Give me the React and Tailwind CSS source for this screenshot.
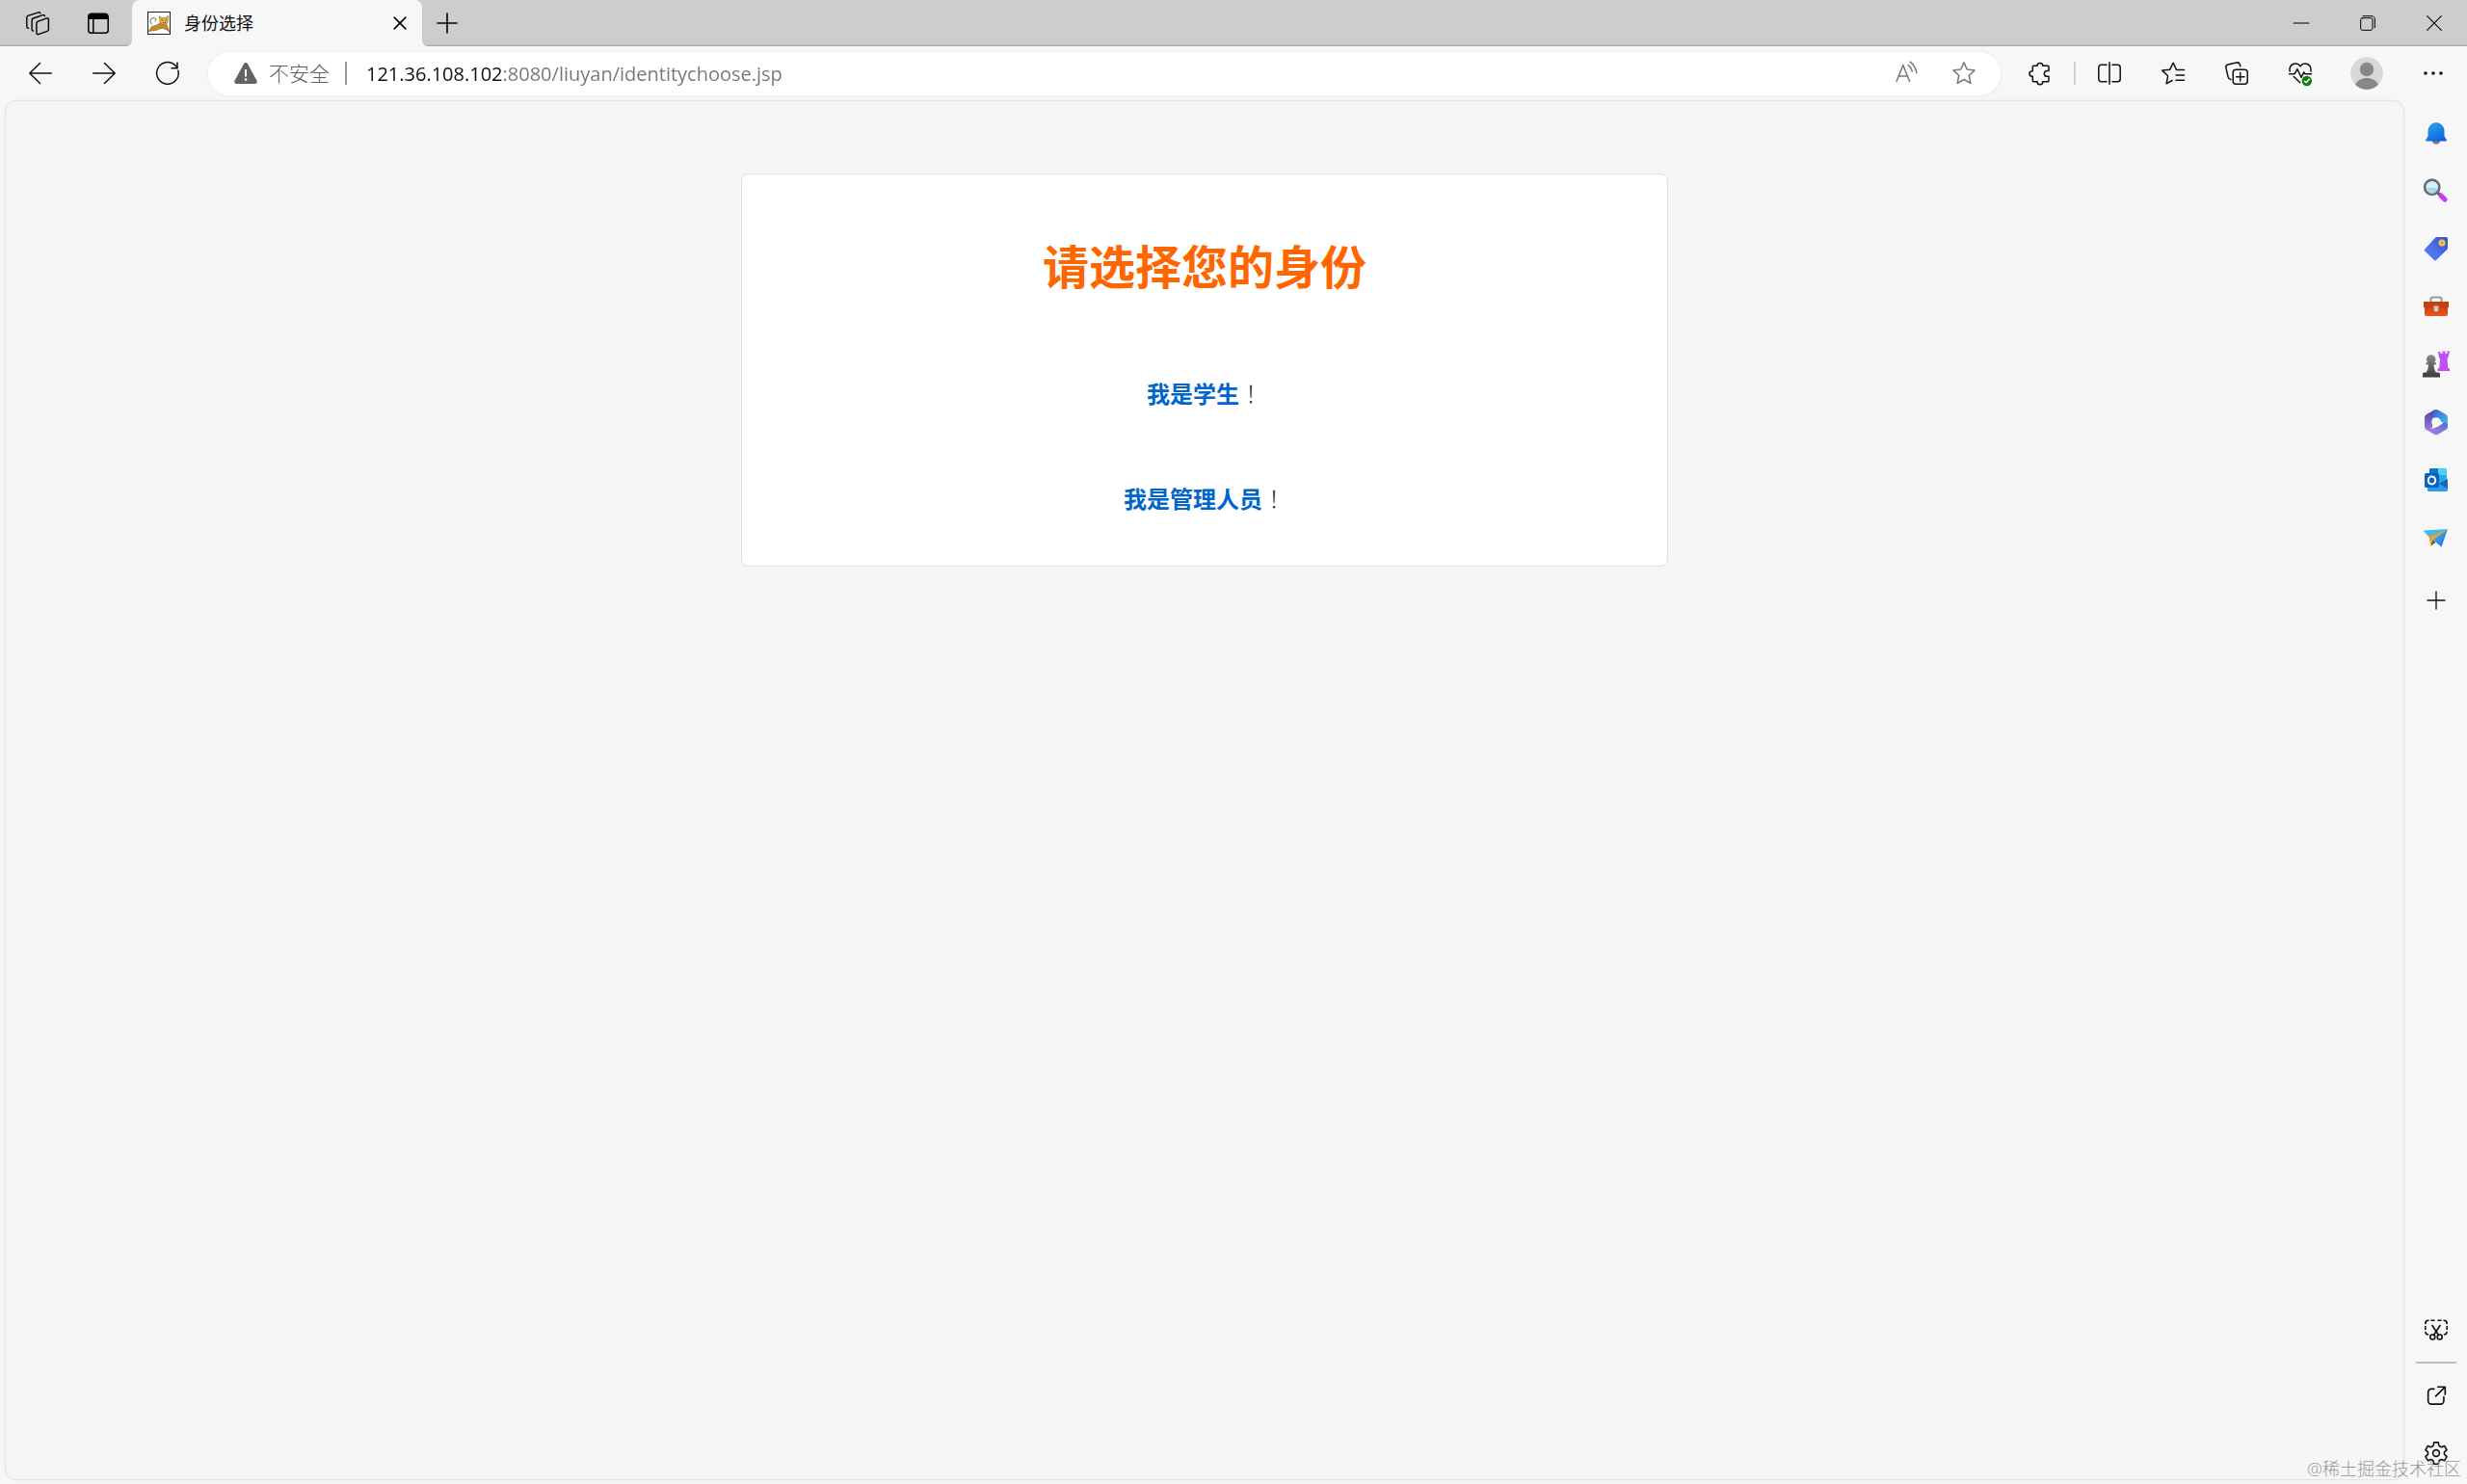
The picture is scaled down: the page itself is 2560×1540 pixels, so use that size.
import { useState } from 'react';

const Icon = ({ children, size = 'size-6', width = 1.5 }) => (
  <svg
    viewBox="0 0 24 24"
    className={`${size} shrink-0 overflow-visible`}
    fill="none"
    stroke="currentColor"
    strokeWidth={width}
    strokeLinecap="round"
    strokeLinejoin="round"
    aria-hidden="true"
  >
    {children}
  </svg>
);

const IconButton = ({ label, className = 'w-[66px]', children }) => (
  <button aria-label={label} className={`${className} flex h-full shrink-0 items-center justify-center`}>
    {children}
  </button>
);

const STAR = 'M12 .9l3.2 7.1 7.9.9-5.8 5.4 1.5 8.1-6.8-3.9-6.8 3.9 1.5-8.1L.9 8.9l7.9-.9z';

const TomcatIcon = () => (
  <svg viewBox="0 0 24 24" className="size-6 shrink-0" aria-hidden="true">
    <rect x=".5" y=".5" width="23" height="23" fill="#fff" stroke="#222" />
    <path d="M1 20.500l3.500-5 5-1.500 4-2.500 6 1.500 2 4 1.500 4.500-3-2.500-4-1.500-4 .5-2.500 1.500-4.500.5z" fill="#c28f2c" stroke="#76561c" strokeWidth=".5" />
    <path d="M12.300 4.500l2.500 1.800h4l2.600-2 .2 5-1.300 3.500-3 1.200-3.300-1.500-1.500-3z" fill="#dcae4c" stroke="#8b6722" strokeWidth=".5" />
    <path d="M14.500 8.500l1.500.6M20 8.500l-1.500.6M16 11.300l1.500.6 1.500-.6" stroke="#4b3a1c" strokeWidth=".7" fill="none" />
    <path d="M4.500 13.500C2.500 11.500 2.600 7.500 5 6.800c2-.4 3.600.3 4.300 1.700M7.500 10l1.800-1.500" stroke="#333" strokeWidth=".8" fill="none" />
  </svg>
);

const TabStrip = () => (
  <header className="flex h-12 items-stretch bg-[#cdcdcd] pl-[7px] shadow-[inset_0_-2px_2px_-1px_rgba(0,0,0,0.22)]">
    <IconButton label="工作区" className="w-[63px]">
      <Icon width={1.4}>
        <path d="M12 10.3l9.6-3.4a1.3 1.3 0 0 1 1.8 1.3v10.2a2 2 0 0 1-1.3 1.9l-9.2 3.3a1.5 1.5 0 0 1-2-1.4V12a2 2 0 0 1 1.1-1.7z" />
        <path d="M19.5 4.6a1.5 1.5 0 0 0-2-1L7.4 7a2 2 0 0 0-1.3 1.900v9.600a1.500 1.500 0 0 0 1.500 1.500" />
        <path d="M14.8 1.8a1.500 1.500 0 0 0-2-1L2 4.400A2 2 0 0 0 .8 6.300v9.400c0 1 .8 1.600 1.800 1.600" />
      </Icon>
    </IconButton>
    <IconButton label="标签操作" className="w-[63px]">
      <Icon>
        <path d="M1.8 7.300V5.500a3.300 3.300 0 0 1 3.300-3.300h13.800a3.300 3.300 0 0 1 3.300 3.300v1.800z" fill="currentColor" />
        <path d="M1.8 7v12.200a3 3 0 0 0 3 3h14.400a3 3 0 0 0 3-3V7M6.800 7v15" />
      </Icon>
    </IconButton>
    <div className="relative ml-1 flex w-[301px] items-center rounded-t-lg bg-[#f7f7f7] pr-4 pl-4">
      <svg viewBox="0 0 6 6" className="absolute bottom-0 -left-1.5 size-1.5" aria-hidden="true">
        <path d="M6 0v6H0a6 6 0 0 0 6-6z" fill="#f7f7f7" />
      </svg>
      <svg viewBox="0 0 6 6" className="absolute -right-1.5 bottom-0 size-1.5" aria-hidden="true">
        <path d="M0 0v6h6a6 6 0 0 1-6-6z" fill="#f7f7f7" />
      </svg>
      <TomcatIcon />
      <span className="ml-3.5 flex-1 text-lg leading-6 text-[#111]">身份选择</span>
      <button aria-label="关闭标签页" className="flex size-3.5">
        <Icon size="size-3.5" width={2.8}>
          <path d="M2 2l20 20M22 2L2 22" />
        </Icon>
      </button>
    </div>
    <IconButton label="新建标签页" className="w-[52px]">
      <Icon size="size-5" width={1.9}>
        <path d="M12 0v24M0 12h24" />
      </Icon>
    </IconButton>
    <div className="ml-auto flex">
      <IconButton label="最小化" className="w-[69px]">
        <Icon size="size-4" width={1.8}><path d="M0 12h24" /></Icon>
      </IconButton>
      <IconButton label="还原" className="w-[69px]">
        <Icon size="size-4" width={1.5}>
          <rect x="1" y="4" width="18.5" height="19" rx="3" />
          <path d="M4.5 1H18c3 0 5 2 5 5v13" />
        </Icon>
      </IconButton>
      <IconButton label="关闭" className="w-[69px]">
        <Icon size="size-4" width={1.7}><path d="M1 1l22 22M23 1L1 23" /></Icon>
      </IconButton>
    </div>
  </header>
);

const AddressBar = () => {
  const [url, setUrl] = useState('121.36.108.102:8080/liuyan/identitychoose.jsp');

  return (
    <div className="ml-[9px] flex h-[45px] flex-1 items-center rounded-full bg-white pl-[27px] shadow-[0_0_0_2px_#f2f2f2]">
      <button className="flex items-center text-[21px] leading-8 font-light text-[#5f5f5f]">
        <svg viewBox="0 0 24 24" className="mr-3 size-6" aria-hidden="true">
          <path d="M10 2.2a2.3 2.3 0 0 1 4 0l9.5 17.5a2.2 2.2 0 0 1-2 3.3h-19a2.2 2.2 0 0 1-2-3.3z" fill="#636363" />
          <path d="M12 8v7.5" stroke="#fff" strokeWidth="2" />
          <circle cx="12" cy="18.6" r="1.3" fill="#fff" />
        </svg>
        不安全
      </button>
      <span className="mx-4 h-6 w-0.5 bg-[#999]" />
      <input
        type="text"
        aria-label="地址栏"
        value={url}
        onChange={(e) => setUrl(e.target.value)}
        className="ml-1 h-8 min-w-0 flex-1 bg-[linear-gradient(to_right,#111_142px,#767676_142px)] bg-clip-text text-xl text-transparent caret-black outline-none"
      />
      <div className="flex h-full text-[#777]">
        <IconButton label="大声朗读" className="w-[60px]">
          <Icon>
            <path d="M2 20.5L8.8 3.5l6.8 17M4.300 15h9.200" />
            <path d="M14.300 3.600c1.900 1.600 3.300 3.800 4 6.400M16 .200c3.700 2.600 6 6.600 6.900 11.300" />
          </Icon>
        </IconButton>
        <IconButton label="收藏" className="mr-2 w-[60px]">
          <Icon><path d={STAR} /></Icon>
        </IconButton>
      </div>
    </div>
  );
};

const Toolbar = () => (
  <div className="flex h-14 items-center pr-0.5 pl-[9px] text-[#111]">
    <IconButton label="后退">
      <Icon><path d="M23.3 12H.8M11.5 1.5L.8 12l10.7 10.5" /></Icon>
    </IconButton>
    <IconButton label="前进">
      <Icon><path d="M.7 12h22.5M12.5 1.5L23.2 12 12.5 22.5" /></Icon>
    </IconButton>
    <IconButton label="刷新">
      <Icon>
        <path d="M22.900 9.200A11.300 11.300 0 1 1 20 4l1.900 2.300" />
        <path d="M22 .600v6.200h-6.400" strokeLinecap="butt" />
      </Icon>
    </IconButton>
    <AddressBar />
    <IconButton label="扩展" className="ml-2 w-[66px]">
      <Icon>
        <path d="M9 4.300a2.900 2.900 0 0 1 5.800 0h5a1.200 1.200 0 0 1 1.200 1.200v4h-1.800a2.900 2.900 0 0 0 0 5.800H21v4.200a1.200 1.200 0 0 1-1.200 1.200h-5.100v.3a2.800 2.800 0 0 1-5.600 0v-.3H5.500a1.200 1.200 0 0 1-1.200-1.200v-4.200h-.5a2.800 2.800 0 0 1 0-5.600h.5V5.500a1.200 1.200 0 0 1 1.200-1.200z" />
      </Icon>
    </IconButton>
    <span className="mx-0.5 h-6 w-0.5 bg-[#d0d0d0]" />
    <IconButton label="分屏">
      <Icon>
        <path d="M12 .8v22.400M9 3.300H3.600A2.800 2.800 0 0 0 .8 6.100v11.800a2.800 2.800 0 0 0 2.800 2.800H9M15 3.300h5.400a2.800 2.800 0 0 1 2.800 2.800v11.800a2.800 2.800 0 0 1-2.800 2.800H15" />
      </Icon>
    </IconButton>
    <IconButton label="收藏夹">
      <Icon>
        <path d="M23.500 8.500h-8l-3.300-7.300-3.500 7-7.900.9 5.800 5.700-1.500 8 6-3.300M15 14h8.500M15 19.300h8.500" />
      </Icon>
    </IconButton>
    <IconButton label="集锦">
      <Icon>
        <rect x="8.2" y="8.2" width="15" height="15" rx="3" />
        <path d="M15.700 11.500v8.400M11.500 15.700h8.400M5.800 18.500a3.400 3.400 0 0 1-2.700-2.600L.9 6.300a2.700 2.700 0 0 1 2-3.200l9-2.100a2.900 2.900 0 0 1 3.500 2.100l.4 1.700" />
      </Icon>
    </IconButton>
    <IconButton label="浏览器概要">
      <Icon>
        <path d="M1.200 10A6 6 0 0 1 1 7.700c.4-5.900 7.600-7.700 11-3C15.400 0 22.600 1.800 23 7.700c0 .8 0 1.500-.2 2.300M.5 12.700h5.700l2.800-5 4 8.600 2.700-5.400 1.200 1.800h6.600M5.300 15.500l6.500 6.200" />
        <circle cx="18.8" cy="20" r="5.2" fill="#107c10" stroke="none" />
        <path d="M16.500 20.200l1.600 1.600 3.200-3.500" stroke="#fff" />
      </Icon>
    </IconButton>
    <IconButton label="个人资料" className="w-[72px]">
      <svg viewBox="0 0 34 34" className="size-[34px] rounded-full" aria-hidden="true">
        <circle cx="17" cy="17" r="17" fill="#d8d8d8" />
        <circle cx="17" cy="13" r="7.2" fill="#8a8785" />
        <path d="M5 29c2-4.500 6.800-7 12-7s10 2.500 12 7a17 17 0 0 1-24 0z" fill="#8a8785" />
      </svg>
    </IconButton>
    <IconButton label="设置及其他">
      <svg viewBox="0 0 24 24" className="size-6 overflow-visible" fill="currentColor" aria-hidden="true">
        <circle cx="4" cy="12" r="1.8" />
        <circle cx="12" cy="12" r="1.8" />
        <circle cx="20" cy="12" r="1.8" />
      </svg>
    </IconButton>
  </div>
);

// Shared gradients for the sidebar app icons
const Gradients = () => (
  <svg className="absolute size-0" aria-hidden="true">
    <defs>
      <linearGradient id="bell" x1="0" y1="0" x2=".6" y2="1">
        <stop offset="0" stopColor="#2ab0e6" /><stop offset="1" stopColor="#1461e0" />
      </linearGradient>
      <linearGradient id="purple" x1="0" y1="0" x2="1" y2="1">
        <stop offset="0" stopColor="#b455f7" /><stop offset="1" stopColor="#c94bf5" />
      </linearGradient>
      <linearGradient id="tag" x1="1" y1="0" x2="0" y2="1">
        <stop offset="0" stopColor="#3a50c8" /><stop offset="1" stopColor="#5b86ff" />
      </linearGradient>
      <linearGradient id="gray" x1="0" y1="0" x2="0" y2="1">
        <stop offset="0" stopColor="#8a8a8a" /><stop offset="1" stopColor="#3c3c3c" />
      </linearGradient>
      <linearGradient id="box" x1="0" y1="0" x2="0" y2="1">
        <stop offset="0" stopColor="#c8430f" /><stop offset="1" stopColor="#e8571a" />
      </linearGradient>
      <linearGradient id="blue" x1="0" y1="0" x2="1" y2="1">
        <stop offset="0" stopColor="#2b5fc9" /><stop offset="1" stopColor="#55c0f2" />
      </linearGradient>
      <linearGradient id="violet" x1="0" y1="0" x2="0" y2="1">
        <stop offset="0" stopColor="#4e3f9e" /><stop offset="1" stopColor="#9a7bd6" />
      </linearGradient>
      <linearGradient id="lilac" x1="0" y1="1" x2="1" y2="0">
        <stop offset="0" stopColor="#a883dd" /><stop offset=".5" stopColor="#8a7bdb" /><stop offset="1" stopColor="#3f6fd0" />
      </linearGradient>
      <linearGradient id="plane" x1="0" y1="0" x2="1" y2="1">
        <stop offset="0" stopColor="#4cc4ee" /><stop offset="1" stopColor="#1f62dd" />
      </linearGradient>
    </defs>
  </svg>
);

const sidebarApps = [
  {
    label: '通知',
    art: (
      <>
        <path d="M10 22h8a4 3.6 0 0 1-8 0z" fill="#777" />
        <path d="M5.5 12a8.5 9 0 0 1 17 0v5.5l2.300 3.500a1 1 0 0 1-.8 1.500H4a1 1 0 0 1-.8-1.500l2.300-3.500z" fill="url(#bell)" />
      </>
    ),
  },
  {
    label: '搜索',
    art: (
      <>
        <path d="M15.500 16l3 2.500" stroke="#555" strokeWidth="3" />
        <path d="M18.800 18.900l4.400 4.200" stroke="#c43df0" strokeWidth="5" strokeLinecap="round" />
        <circle cx="9.7" cy="10.2" r="7.6" fill="#d8effa" stroke="#666b70" strokeWidth="2.6" />
        <path d="M4 11h11.400a5.700 5.700 0 0 1-11.400 0z" fill="#a5d8ee" />
      </>
    ),
  },
  {
    label: '购物',
    art: (
      <>
        <path d="M15 2h9a2 2 0 0 1 2 2v9c0 1-.3 1.600-1 2.300L14.500 25.500a2 2 0 0 1-3 0L2.700 17a2 2 0 0 1 0-3L12.800 3c.6-.6 1.200-1 2.200-1z" fill="url(#tag)" />
        <circle cx="20" cy="8" r="2.4" fill="#b59a5c" stroke="#f5c648" strokeWidth="2.2" />
      </>
    ),
  },
  {
    label: '工具',
    art: (
      <>
        <path d="M8.500 10V6.500a2 2 0 0 1 2-2h7a2 2 0 0 1 2 2V10" fill="none" stroke="#999" strokeWidth="2" />
        <path d="M2 13h24v9a2 2 0 0 1-2 2H4a2 2 0 0 1-2-2z" fill="url(#box)" />
        <path d="M1 9h26v5.500a1 1 0 0 1-1 1H2a1 1 0 0 1-1-1z" fill="#c7400d" />
        <path d="M11.500 13.500h5v3.500a2.500 2.500 0 0 1-5 0z" fill="#c9c9c9" />
      </>
    ),
  },
  {
    label: '游戏',
    art: (
      <>
        <path d="M16 1h2.500v2h2V.5h3v2.500h2V.2H28L26.500 7l-1 1 .7 9.500 1.800 1.500v2H15.500v-2l1.800-1.500L18 8l-1-1z" fill="url(#purple)" />
        <path d="M8.700 4.200a4.600 4.600 0 0 1 3.200 8H14v2h-2.500c.2 4 1 6.500 2.500 8.300h2.500a1.500 1.500 0 0 1 1.500 1.500v3.500H0V24a1.500 1.500 0 0 1 1.500-1.500H3.500c1.500-1.800 2.300-4.300 2.500-8.300H3.500v-2h2a4.600 4.600 0 0 1 3.200-8z" fill="url(#gray)" />
      </>
    ),
  },
  {
    label: 'Microsoft 365',
    art: (
      <>
        <path d="M11 2.200l1.200-.8a4 4 0 0 1 3.800 0l8 4.600a4 4 0 0 1 2 3.500V18l-9-6-8-2z" fill="url(#blue)" />
        <path d="M13 1L4 6a4 4 0 0 0-2 3.500v9A4 4 0 0 0 4 22l6-2V11c0-4 1-7 3-10z" fill="url(#violet)" />
        <path d="M26 16.500v2a4 4 0 0 1-2 3.500l-8 4.700a4 4 0 0 1-4 0L4 22l-1.500-1.700c5 1 9 .7 12.500-1.300l8-5z" fill="url(#lilac)" />
        <circle cx="14" cy="14" r="4.800" fill="#f7f7f7" />
      </>
    ),
  },
  {
    label: 'Outlook',
    art: (
      <>
        <rect x="7" y="2" width="18" height="15" rx="1.5" fill="#28a8ea" />
        <path d="M7 3.500A1.500 1.500 0 0 1 8.500 2H16v7H7z" fill="#0f78c4" />
        <path d="M16 2h7.500A1.500 1.500 0 0 1 25 3.500V9h-9z" fill="#50d0f5" />
        <path d="M5 13h8l13 8v3.500a1.500 1.500 0 0 1-1.500 1.500h-18A1.500 1.500 0 0 1 5 24.500z" fill="#28a0e6" />
        <path d="M26 13v10L17 18z" fill="#1666b3" />
        <rect x="2" y="7" width="15" height="15" rx="1.5" fill="#0c65bd" />
        <ellipse cx="9.5" cy="14.5" rx="3.7" ry="4" fill="none" stroke="#fff" strokeWidth="2" />
      </>
    ),
  },
  {
    label: '投递',
    art: (
      <>
        <path d="M.5 6.500L26 5 8 15z" fill="#45b9e8" />
        <path d="M6.500 13L26 5l-16 11-1.500 6.500z" fill="#f0a023" />
        <path d="M8.500 22.500l1.800-6.500 3.200 3z" fill="#7b5417" />
        <path d="M26 5l-6.500 18.500L10.300 16z" fill="url(#plane)" />
      </>
    ),
  },
];

const Sidebar = () => (
  <aside className="flex w-[65px] shrink-0 flex-col items-center pt-1 pb-0.5 text-[#111]">
    <Gradients />
    {sidebarApps.map((app) => (
      <button key={app.label} aria-label={app.label} className="flex h-15 w-full items-center justify-center">
        <svg viewBox="0 0 28 28" className="size-7 overflow-visible" aria-hidden="true">{app.art}</svg>
      </button>
    ))}
    <button aria-label="自定义" className="flex h-[70px] w-full items-center justify-center">
      <Icon size="size-[18px]" width={1.8}><path d="M12 0v24M0 12h24" /></Icon>
    </button>
    <button aria-label="屏幕截图" className="mt-auto flex h-15 w-full items-center justify-center">
      <Icon width={1.6}>
        <path d="M.8 5.500A3.300 3.300 0 0 1 4 2.200M7 2.200h3M14 2.200h3M20 2.200a3.300 3.300 0 0 1 3.200 3.300M23.200 8.500v3M23.200 14.500A3.300 3.300 0 0 1 20.500 17M.8 8.500v3M.8 14.500A3.300 3.300 0 0 0 3.500 17" />
        <path d="M8 7.500l6.500 10M16 7.500l-6.500 10" />
        <circle cx="8.3" cy="19.5" r="2.5" />
        <circle cx="15.7" cy="19.5" r="2.5" />
      </Icon>
    </button>
    <hr className="my-[3px] h-0.5 w-[42px] border-0 bg-[#bdbdbd]" />
    <button aria-label="在新窗口打开" className="flex h-15 w-full items-center justify-center">
      <Icon size="size-5" width={2}>
        <path d="M9.500 4H6a4 4 0 0 0-4 4v11a4 4 0 0 0 4 4h11.500a4 4 0 0 0 4-4v-5M14 1.500h9.200v9.200M23 1.700L11.500 13" />
      </Icon>
    </button>
    <button aria-label="设置" className="flex h-15 w-full items-center justify-center">
      <Icon width={1.6}>
        <path d="M9.700.9h4.600l.7 3.500 2.300 1.300 3.300-1.200 2.500 4.100-2.600 2.300v2.400l2.600 2.300-2.500 4.100-3.300-1.200-2.300 1.300-.7 3.500H9.700L9 19.800l-2.300-1.300-3.300 1.200-2.500-4.100 2.600-2.300v-2.400L.9 8.600l2.500-4.100 3.300 1.200L9 4.400z" />
        <circle cx="12" cy="12" r="3.4" />
      </Icon>
    </button>
  </aside>
);

const identities = [
  { label: '我是学生', href: '#student' },
  { label: '我是管理人员', href: '#admin' },
];

const IdentityCard = () => (
  <section className="w-[962px] max-w-full rounded-lg border border-[#e1e1e1] bg-white pt-[60px] pb-13 text-center">
    <h1 className="text-5xl leading-[72px] font-bold text-[#ff6600]">请选择您的身份</h1>
    <div className="mt-[77px] flex flex-col gap-[73px]">
      {identities.map((item) => (
        <p key={item.label} className="font-['Noto_Sans_CJK_TC',sans-serif] text-2xl leading-9 font-light text-[#333]">
          <a href={item.href} className="font-['Noto_Sans_CJK_SC',sans-serif] font-bold text-[#0066cc]">
            {item.label}
          </a>
          ！
        </p>
      ))}
    </div>
  </section>
);

const App = () => {
  return (
    <div className="relative flex min-h-screen flex-col bg-[#f7f7f7] font-['Open_Sans','Noto_Sans_CJK_SC',sans-serif]">
      <TabStrip />
      <Toolbar />
      <div className="flex flex-1">
        <main className="mb-1 ml-[5px] flex flex-1 flex-col items-center rounded-xl border border-[#e4e4e4] bg-[#f6f6f6] pt-[75px] shadow-[0_0_2px_rgba(0,0,0,0.08)]">
          <IdentityCard />
        </main>
        <Sidebar />
      </div>
      <p className="pointer-events-none absolute right-1.5 bottom-1 text-lg leading-6 font-light text-[#999]">@稀土掘金技术社区</p>
    </div>
  );
};

export default App;
